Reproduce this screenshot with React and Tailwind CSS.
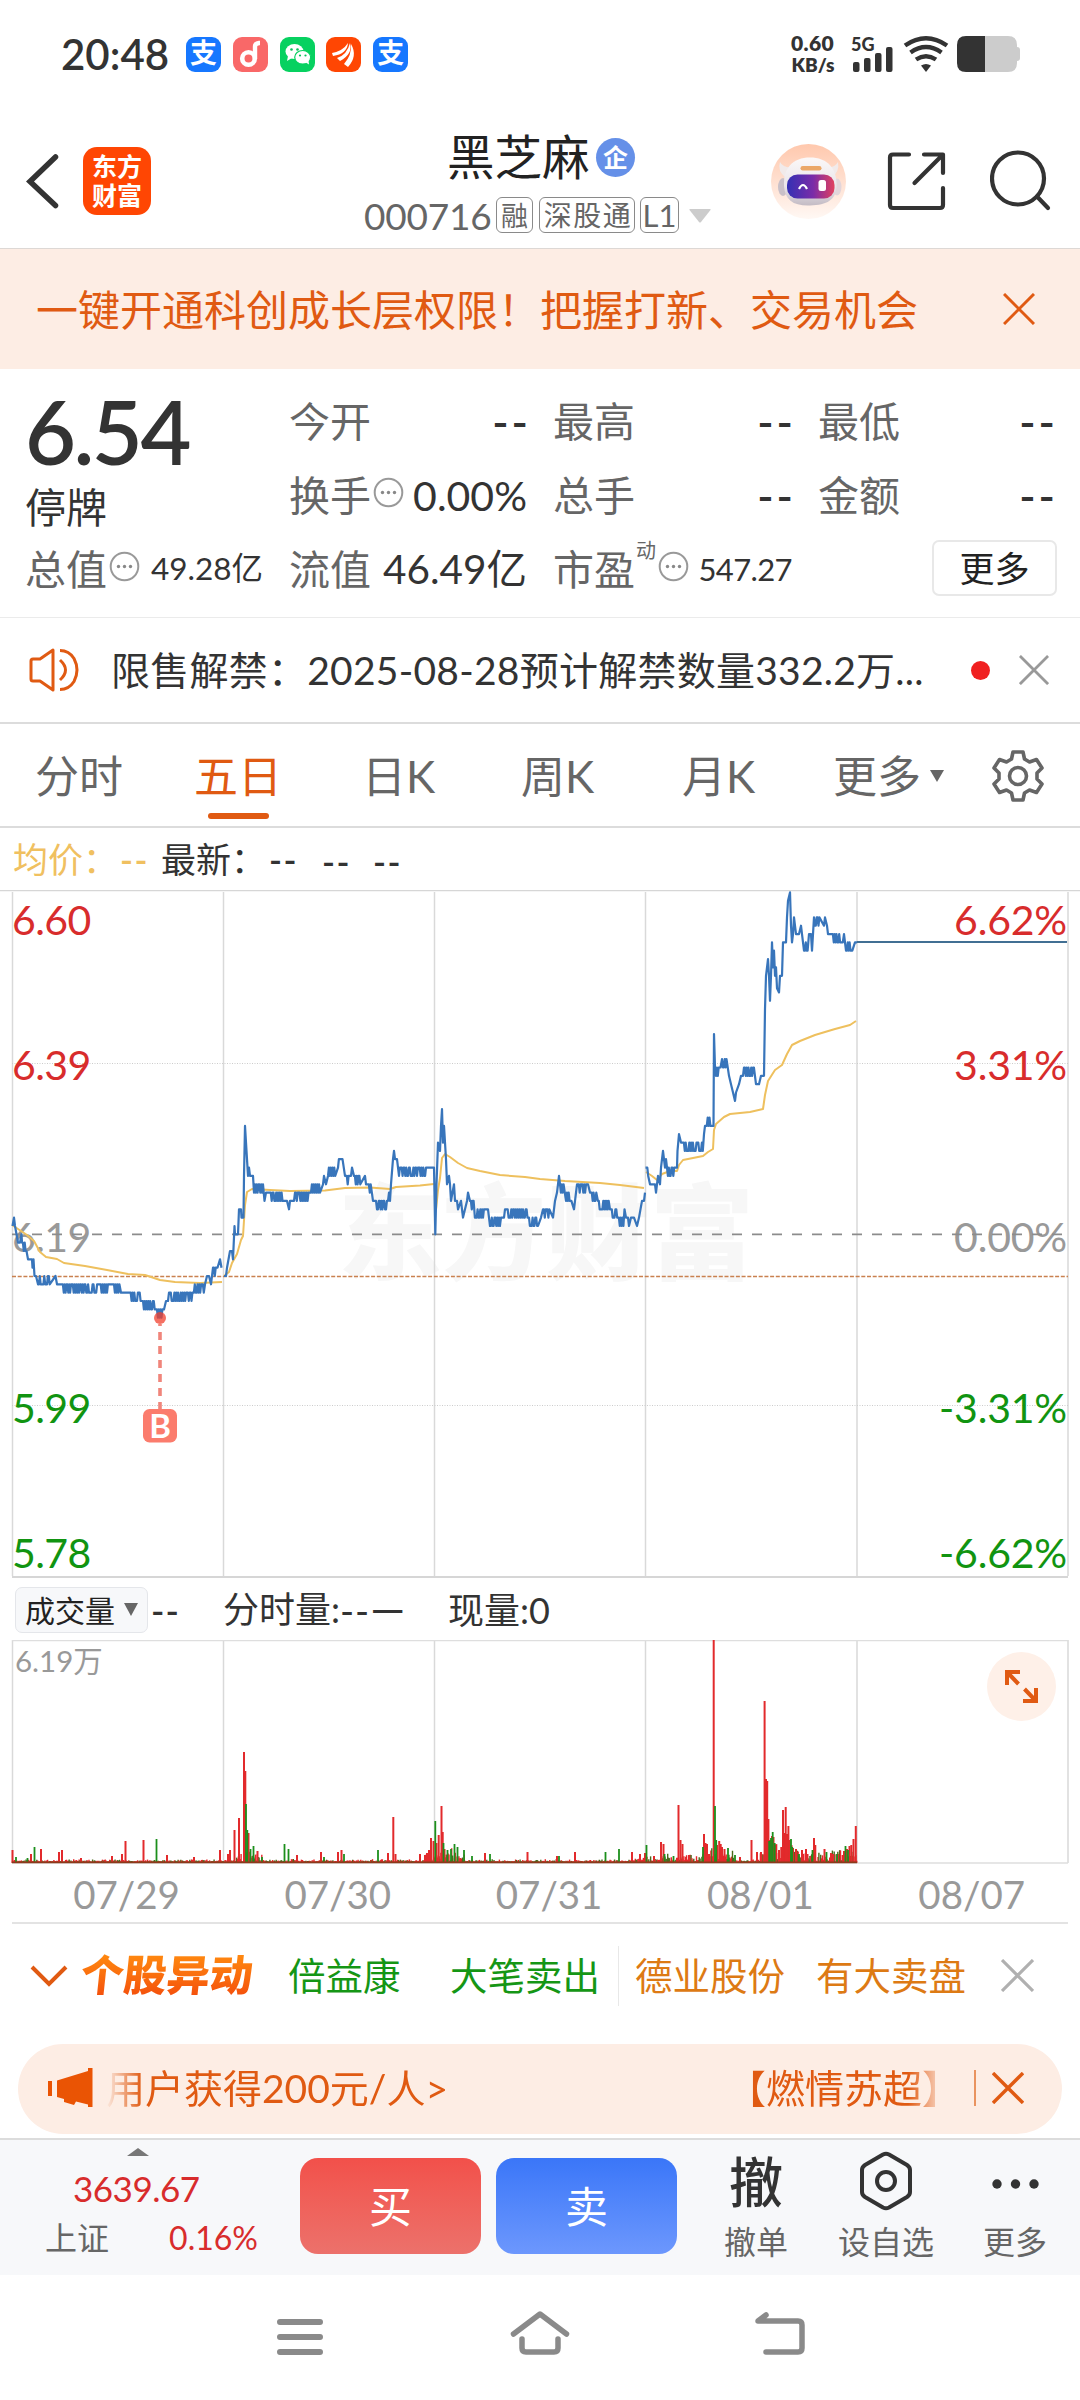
import { useId } from "react";

const DAYS = ["07/29", "07/30", "07/31", "08/01", "08/07"];
const GRID_X = [12.5, 223.5, 434.5, 645.5, 857, 1068];
const ZERO_Y = 1234.3;
const TICK = 8.34;

// [x, tick] is a plain point, [x, tick, 1] flickers between tick and tick + 1 up to x
const PRICE = [
  [
    [12.5, 1], [14, 2], [15, 1], [16.5, 0], [18, -1], [20, -1], [21.5, 0], [22, -1], [27, -2, 1], [28, -3], [32, -3],
    [32.5, -4], [33.5, -3], [34.5, -5], [36, -5], [38, -6], [50, -6, 1], [55.5, -5], [57, -6], [62, -6], [108, -7, 1],
    [114, -6], [120, -7, 1], [121, -7], [128, -7], [141, -8, 1], [143, -8], [156, -9, 1], [157, -9], [163, -10, 1],
    [164, -9], [166, -8], [168, -8], [169, -7], [193, -8, 1], [204, -7, 1], [205, -6], [207, -5], [209, -5], [211, -6],
    [213, -4], [218, -5, 1], [220, -3], [221.5, -4]
  ],
  [
    [224, -5], [226, -5], [227, -4], [230, -2], [232, -2], [233, -3], [234.5, 1], [235, 0], [238, 0], [239, 3], [241, 3],
    [241.5, 2], [243.5, 2], [244, 7], [245, 13], [246, 11], [248, 7], [249, 8], [250, 7], [253, 7], [254, 5],
    [263, 5, 1], [264.5, 4], [266, 5], [269, 5], [285, 4, 1], [287, 4], [289, 3], [290, 4], [294, 4], [295, 5],
    [309, 4, 1], [311, 5], [320, 5, 1], [323, 6], [324, 7], [326, 6], [328, 7], [336, 7, 1], [338, 8], [343, 8, 1],
    [345, 7], [349, 6, 1], [351, 7], [352, 8], [354, 7], [361, 6, 1], [365, 7], [366, 6], [368, 6], [371, 5, 1],
    [373, 4], [376, 4], [377, 3], [387, 3, 1], [388, 4], [389, 5], [390, 4], [391, 6], [393, 9], [394, 10], [395, 9],
    [397, 9], [399, 7], [427, 7, 1], [434, 8], [435.3, 0], [436.5, 6], [438, 11], [440, 10], [441, 13], [442, 15],
    [443, 11], [444, 13], [446, 9], [447, 6], [449, 7], [450, 6], [451, 4], [454, 6], [455, 4], [457, 4], [458, 3],
    [461, 4], [463, 2], [465, 3], [467, 4], [468, 5], [470, 4], [474, 3, 1], [485, 2, 1], [488, 3], [490, 1],
    [500, 1, 1], [501, 2], [504, 2], [505, 3], [528, 2, 1], [529, 2], [538, 1, 1], [541, 2], [543, 3], [550, 2, 1],
    [553, 2], [555, 4], [557, 5], [559, 7], [560, 6], [564, 5, 1], [566, 4], [572, 4, 1], [574, 3], [576, 5], [577, 6],
    [587, 5, 1], [588, 6], [590, 5], [597, 4, 1], [609, 3, 1], [610, 3], [618, 2, 1], [624, 1, 1], [624.5, 3], [626, 2],
    [628, 2], [629, 1], [631, 2], [634, 2], [637, 1], [639, 2], [642, 4], [644, 4], [645, 5]
  ],
  [
    [645.5, 8], [649, 7, 1], [650, 6], [655, 6], [656, 5], [658, 7], [660, 6], [661, 8], [663, 10], [665, 8], [666, 9],
    [667, 8], [675, 7, 1], [677, 8], [677.5, 10], [679, 12], [681, 11], [683, 11], [703, 10, 1], [704, 12], [705, 13],
    [713, 13, 1], [713.5, 13], [714, 24], [715, 20], [716, 19], [721, 19, 1], [722, 21], [727, 20, 1], [729, 19],
    [731, 18], [733, 17], [735, 16], [736, 17], [739, 18], [741, 19], [743, 19], [744, 20], [754, 19, 1], [756, 18],
    [759, 18], [761, 19], [764, 19], [765, 27], [766, 31], [768, 33], [769, 31], [770, 28], [771, 31], [772, 35],
    [773, 32], [774, 34], [775, 31], [776, 32], [777, 29.5], [779, 29], [780, 31], [782, 31], [783, 35], [786, 35],
    [787, 38], [788, 40], [790, 41], [791, 37], [792, 35], [793, 36], [794, 38], [796, 36], [799, 36], [801, 37],
    [802, 36], [803, 35], [804, 34], [808, 34, 1], [809, 36], [811, 36], [812, 34], [814, 38], [820, 37, 1], [824, 37],
    [825, 38], [827, 37], [828, 36], [832, 36], [843, 35, 1], [844, 36], [846, 34], [853, 34, 1], [855, 35], [857, 35]
  ]
];

const AVERAGE = [
  "12,1225 18,1229 27,1235 34,1241 40,1252 46,1257 57,1259 64,1263 85,1266 107,1270 128,1274 145,1275 160,1280 175,1282 200,1283 222,1282",
  "224,1276 229,1272 232,1263 237,1254 241,1240 243,1236 245,1205 247,1192 252,1189 270,1190 290,1191 325,1190.5 345,1188 370,1187.5 390,1189 396,1187 420,1185.5 434,1184",
  "436,1210 438,1190 440,1178 442,1158 445,1154 450,1157 458,1163 467,1168 480,1171 500,1175 525,1177 540,1179 565,1181 600,1183 620,1185 644,1188",
  "646,1172 652,1176 657,1180 662,1174 670,1171 677,1171 679,1165 683,1160 703,1156 708,1152 713,1149 714,1130 716,1124 724,1117 730,1114 750,1112 763,1109 765,1095 768,1081 775,1070 782,1065 787,1054 792,1045 800,1041 815,1035 835,1029 850,1025 856,1021"
];

// volume spikes, x and height in px
const VOL_UP = [
  [12.5, 13], [31, 9], [41, 14], [59, 11], [62, 13], [81, 5], [112, 7], [122, 9], [125.5, 22], [143.5, 23], [167, 8],
  [194, 6], [220, 13], [228, 9], [230, 13], [234.5, 33], [239, 45], [244, 111], [245.3, 92], [248.5, 30], [257.5, 12],
  [297, 8], [321, 11], [338, 11], [341.5, 13], [388, 10], [393.3, 46], [395.5, 9], [420, 9], [425, 8], [427, 10],
  [429, 13], [431, 25], [433.5, 22], [436.5, 20], [438.7, 28], [441.5, 57], [442.700, 31], [444.5, 14], [485, 10],
  [527.5, 11], [557, 7], [575, 11], [632, 11], [640, 9], [645, 10], [654, 7], [661, 21], [663.5, 19], [678.5, 58],
  [680.5, 23], [682.5, 19], [689, 8], [704, 29], [705.5, 20], [707, 19], [709, 9], [713.7, 223], [717, 18], [719.2, 22],
  [720.700, 19], [722, 16], [724.5, 14], [740, 6], [751.5, 23], [757, 11], [761, 11], [764.6, 162], [766, 84], [767.2, 82],
  [768.4, 44], [770, 23], [772, 27], [773.500, 26], [779, 13], [781.3, 16], [783, 53], [784.3, 30], [785.7, 56],
  [787, 29], [788.4, 37], [789.6, 23], [793, 15], [796, 14], [802, 13], [806, 14], [807.5, 9], [814, 25], [815.300, 18],
  [824.5, 14], [831, 10], [833, 9], [838, 9], [844, 12], [847, 14], [849.500, 17], [851.300, 18], [853.5, 24], [855.8, 37]
];
const VOL_DOWN = [
  [16, 6], [34.5, 16], [27.5, 5], [156.5, 24], [246, 59], [247.3, 33], [250.5, 14], [253.5, 17], [262, 6], [284.5, 19],
  [288.5, 14], [378, 13], [324, 6], [344, 9], [435.3, 42], [443.500, 20], [447.5, 13], [451, 14], [454.5, 19], [457.5, 16],
  [464, 13], [472, 7], [490, 9], [559, 7], [605.5, 11], [619, 14], [646.5, 18], [664.500, 9], [673.5, 7], [703, 16],
  [715, 57], [716.2, 23], [728, 15], [735, 8], [769.2, 22], [771, 25], [772.700, 31], [774.700, 20], [791, 24],
  [792.2, 16], [799, 9], [812.5, 13], [826.5, 11], [837, 9], [845.5, 17], [848, 13]
];

const rand = (n) => {
  const v = Math.sin(n * 127.1 + 11.7) * 43758.5453;
  return v - Math.floor(v);
};

function pricePath(points) {
  const out = [];
  let prevX = points[0][0];
  points.forEach(([x, tick, flicker]) => {
    if (flicker) {
      let up = false;
      for (let px = prevX + 0.9; px < x; px += 0.9) {
        if (rand(px) > 0.3) up = !up;
        out.push(`${px.toFixed(1)},${(ZERO_Y - (tick + (up ? 1 : 0)) * TICK).toFixed(1)}`);
      }
    } else {
      out.push(`${x},${(ZERO_Y - tick * TICK).toFixed(1)}`);
    }
    prevX = x;
  });
  return out.join(" ");
}

// background trading noise, heavier around the busy stretches
function noiseHeight(x) {
  let base = 2.5;
  if (x > 235 && x < 262) base = 12;
  else if (x > 425 && x < 465) base = 14;
  else if (x > 635 && x < 700) base = 8;
  else if (x > 700 && x < 735) base = 15;
  else if (x > 760 && x < 800) base = 24;
  else if (x >= 800) base = 15;
  return 1.5 + (0.25 + 0.75 * rand(x)) * rand(x + 3) * base;
}

const NOISE = Array.from({ length: 939 }, (_, i) => {
  const x = 12.5 + i * 0.9;
  return { x, h: noiseHeight(x), up: rand(x * 3) > 0.4 };
});

function Cross({ className, width = 3 }) {
  return (
    <svg className={className} viewBox="0 0 32 32" fill="none" stroke="currentColor" strokeWidth={width}>
      <path d="M1 1 31 31M31 1 1 31" />
    </svg>
  );
}

function Hint({ className }) {
  return (
    <svg className={className} viewBox="0 0 31 31">
      <circle cx="15.5" cy="15.5" r="13.8" fill="none" stroke="#999" strokeWidth="2" />
      <circle cx="9.5" cy="15.5" r="1.7" fill="#888" />
      <circle cx="15.5" cy="15.5" r="1.7" fill="#888" />
      <circle cx="21.5" cy="15.5" r="1.7" fill="#888" />
    </svg>
  );
}

function PayIcon() {
  return (
    <div className="flex size-[35px] items-center justify-center rounded-[9px] bg-[#1677ff] text-[27px] leading-none font-bold text-white">
      <span className="-mt-[3px]">支</span>
    </div>
  );
}

function StatusBar() {
  return (
    <div className="flex h-[108px] shrink-0 items-center pl-[61px] text-[#333]">
      <div className="w-[125px] text-[42px] leading-none font-semibold">20:48</div>
      <div className="flex w-[604px] gap-[11.8px]">
        <PayIcon />
        <svg className="size-[35px]" viewBox="0 0 35 35">
          <rect width="35" height="35" rx="9" fill="#f96868" />
          <circle cx="15.5" cy="21.5" r="6.3" fill="none" stroke="#fff" strokeWidth="4.6" />
          <path d="M22 22V9.5q0-3 4-3.5h1" fill="none" stroke="#fff" strokeWidth="4.4" />
        </svg>
        <svg className="size-[35px]" viewBox="0 0 35 35">
          <rect width="35" height="35" rx="9" fill="#07d160" />
          <ellipse cx="14.5" cy="14.5" rx="9" ry="7.5" fill="#fff" />
          <path d="M8 19l-1 5 5-3z" fill="#fff" />
          <ellipse cx="22.7" cy="20.3" rx="8" ry="6.8" fill="#fff" stroke="#07d160" strokeWidth="1.2" />
          <path d="M25 25l4 2.6-.5-4z" fill="#fff" />
          <circle cx="11.5" cy="12.5" r="1.3" fill="#07c05a" />
          <circle cx="17.5" cy="12.5" r="1.3" fill="#07c05a" />
          <circle cx="20" cy="18.5" r="1.1" fill="#07c05a" />
          <circle cx="25.5" cy="18.5" r="1.1" fill="#07c05a" />
        </svg>
        <svg className="size-[35px]" viewBox="0 0 35 35">
          <rect width="35" height="35" rx="9" fill="#ff4603" />
          <path d="M6 16Q17 14 22 6q-1 11-15 13z" fill="#fff" />
          <path d="M11 21Q21 18 24 6q3 11-10 18z" fill="#fff" />
          <path d="M18 27Q26 18 25 7q7 12-3 23z" fill="#fff" />
        </svg>
        <PayIcon />
      </div>
      <div className="w-[60px] text-center text-[21px] leading-[22px] font-extrabold">
        <div className="-ml-[15px] tracking-[0.4px]">0.60</div>
        <div className="-ml-[14px] text-[19px]">KB/s</div>
      </div>
      <svg className="h-[48px] w-[172px] shrink-0" viewBox="850 30 172 48" fill="#333">
        <text x="851" y="50.5" fontSize="18" fontWeight="900">5G</text>
        <rect x="853" y="62" width="6.5" height="10" rx="2" />
        <rect x="864" y="58" width="6.5" height="14" rx="2" />
        <rect x="875" y="53" width="6.5" height="19" rx="2" />
        <rect x="886" y="47" width="6.5" height="25" rx="2" />
        <g fill="none" stroke="#333" strokeWidth="4.4">
          <path d="M905 45.5Q926 31 947 45.5" />
          <path d="M910.5 52.5Q926 41.5 941.5 52.5" />
          <path d="M916 59.5Q926 53 936 59.5" />
        </g>
        <path d="M921 65.5q5-3 10 0L926 72z" />
        <path d="M965 36h43q9 0 9 9v2q3 0 3 3v8q0 3-3 3v2q0 9-9 9h-23V36z" fill="#ccc" />
        <path d="M985 36h-19q-9 0-9 9v18q0 9 9 9h19z" />
      </svg>
    </div>
  );
}

function Robot() {
  const id = useId();
  return (
    <svg className="ml-[59px] size-[75px] shrink-0" viewBox="0 0 75 75">
      <defs>
        <linearGradient id={`${id}bg`} x2="0" y2="1">
          <stop stopColor="#ffc8ad" />
          <stop offset="1" stopColor="#fff8f4" />
        </linearGradient>
        <linearGradient id={`${id}visor`}>
          <stop stopColor="#3430b4" />
          <stop offset=".55" stopColor="#7a2ca8" />
          <stop offset="1" stopColor="#e2405e" />
        </linearGradient>
        <linearGradient id={`${id}head`} x2="0" y2="1">
          <stop stopColor="#fbf8f8" />
          <stop offset=".6" stopColor="#eae5ea" />
          <stop offset="1" stopColor="#c3bbc4" />
        </linearGradient>
      </defs>
      <circle cx="37.5" cy="37.5" r="37.5" fill={`url(#${id}bg)`} />
      <path d="M15 34Q6 27 9 18q4 7 14 5zM60 34q9-6 7-16-4 7-13 5z" fill="#f1eaea" />
      <ellipse cx="12" cy="43" rx="5" ry="9" fill="#c9c0c8" />
      <ellipse cx="66" cy="43" rx="4.500" ry="8.500" fill="#e2d5da" />
      <path d="M13 42C12 24 22 13.500 39 13.500S66 24 65.500 42C65 56 56 61 39 61.500S14 56 13 42z" fill={`url(#${id}head)`} />
      <rect x="29.5" y="22" width="21" height="4.500" rx="2.200" fill="#eba768" />
      <rect x="16" y="30.500" width="47.500" height="24" rx="10.500" fill={`url(#${id}visor)`} />
      <path d="M28 45q4-8 8 0" fill="none" stroke="#fff" strokeWidth="2.200" />
      <rect x="47.5" y="36" width="7.500" height="11" rx="2.500" fill="#fff" />
    </svg>
  );
}

function Header() {
  return (
    <header className="flex h-[141px] shrink-0 items-center border-b border-[#ddd8d5] pt-[6px] text-[#333]">
      <svg className="ml-[26px] h-[56px] w-[34px]" viewBox="0 0 34 56" fill="none" stroke="currentColor" strokeWidth="5.5" strokeLinecap="round">
        <path d="M29.5 4 4 28.5 29.5 52.5" />
      </svg>
      <div className="ml-[23px] flex size-[68px] flex-col items-center justify-center rounded-[14px] bg-[#ff4603] text-[25px] leading-[29px] font-bold text-white">
        <span>东方</span>
        <span>财富</span>
      </div>
      <div className="ml-[213px] w-[348px] self-start">
        <div className="flex h-[83px] items-center pl-[83px] text-[#222]">
          <h1 className="mt-[2px] w-[149px] text-[47.5px] leading-none">黑芝麻</h1>
          <span className="mt-[4px] flex size-[39px] items-center justify-center rounded-full bg-[#6590e8] text-[25px] leading-none font-bold text-white">
            企
          </span>
        </div>
        <div className="flex h-[36px] items-center text-[28px] leading-none text-[#666]">
          <span className="w-[132px] text-[37px] tracking-[-0.2px]">000716</span>
          <span className="mr-[6px] flex h-[36px] w-[37px] items-center justify-center rounded-[6px] border-[1.5px] border-[#8a8a8a] text-[27px]">融</span>
          <span className="mr-[5px] flex h-[36px] w-[96px] items-center justify-center rounded-[6px] border-[1.5px] border-[#8a8a8a] pl-[2px] tracking-[1.5px]">
            深股通
          </span>
          <span className="flex h-[36px] w-[39px] items-center justify-center rounded-[6px] border-[1.5px] border-[#8a8a8a] text-[31px]">L1</span>
          <svg className="mt-[1px] ml-[10px] h-[14px] w-[22px]" viewBox="0 0 22 14" fill="#ccc">
            <path d="M1 0H21Q22 0 21.5 1L12 13q-1 1-2 0L.5 1Q0 0 1 0z" />
          </svg>
        </div>
      </div>
      <Robot />
      <svg className="ml-[41px] size-[60px] shrink-0" viewBox="0 0 60 60" fill="none" stroke="currentColor" strokeWidth="4.2" strokeLinecap="round" strokeLinejoin="round">
        <path d="M22 3.5H6q-3 0-3 3V54q0 3 3 3H53q3 0 3-3V37" />
        <path d="M37 3.5H56V22M54 5.5 27.5 32" />
      </svg>
      <svg className="ml-[43px] size-[62px] shrink-0" viewBox="0 0 62 62" fill="none" stroke="currentColor" strokeWidth="4.2" strokeLinecap="round">
        <circle cx="28" cy="28.5" r="26" />
        <path d="M47 46.5 58 58" />
      </svg>
    </header>
  );
}

function Stat({ label, children }) {
  return (
    <div className="flex items-center pr-[26px] whitespace-nowrap">
      <span className="mr-auto text-[41px] text-[#666]">{label}</span>
      {children}
    </div>
  );
}

function Dashes() {
  return <span className="mr-[-4px] text-[44px] font-semibold tracking-[3px]">--</span>;
}

function Quote() {
  return (
    <section className="grid h-[249px] shrink-0 grid-cols-[264px_264px_265px_262px] grid-rows-[74px_74px_74px] border-b border-[#ebebeb] pt-[15px] pl-[25px] leading-none text-[#333]">
      <div className="row-span-2">
        <div className="pt-[2px] text-[88px] leading-[90px] font-semibold tracking-[-2.5px]">6.54</div>
        <div className="pt-[11px] text-[41px]">停牌</div>
      </div>
      <Stat label="今开"><Dashes /></Stat>
      <Stat label="最高"><Dashes /></Stat>
      <Stat label="最低"><Dashes /></Stat>
      <Stat label={<span className="flex">换手<Hint className="mt-[2px] ml-[2px] size-[31px]" /></span>}>
        <span className="text-[41px]">0.00%</span>
      </Stat>
      <Stat label="总手"><Dashes /></Stat>
      <Stat label="金额"><Dashes /></Stat>
      <Stat label={<span className="flex">总值<Hint className="mt-[2px] ml-[2px] size-[31px]" /></span>}>
        <span className="text-[31.5px]">49.28亿</span>
      </Stat>
      <Stat label="流值">
        <span className="text-[40.5px]">46.49亿</span>
      </Stat>
      <Stat
        label={
          <span className="flex">
            市盈<small className="-mt-[9px] ml-[1px] text-[20px]">动</small>
            <Hint className="mt-[2px] ml-[2px] size-[31px]" />
          </span>
        }
      >
        <span className="text-[31px] tracking-[-0.6px]">547.27</span>
      </Stat>
      <button className="mt-[8px] ml-[114px] h-[56px] w-[125px] rounded-[7px] border-2 border-[#e8e8e8] text-[35px] leading-none text-[#222]">
        更多
      </button>
    </section>
  );
}

function Notice() {
  return (
    <div className="flex h-[106px] shrink-0 items-center border-b-2 border-[#dcdcdc] text-[#333]">
      <svg className="ml-[28px] h-[46px] w-[54px]" viewBox="0 0 54 46" fill="none" stroke="#e05a12" strokeWidth="3" strokeLinejoin="round">
        <path d="M25 3V43L12 34H5q-2 0-2-2V14q0-2 2-2h7z" />
        <path d="M32 13q11 10 0 20M32 3.5q9 0 14 8 6 11.5 0 23-5 8-14 8" />
      </svg>
      <p className="ml-[29px] w-[860px] text-[39px] leading-none tracking-[0.25px] whitespace-nowrap">限售解禁：2025-08-28预计解禁数量332.2万...</p>
      <span className="size-[19px] rounded-full bg-[#f02020]" />
      <Cross className="ml-[29px] size-[30px] text-[#999]" />
    </div>
  );
}

function Tabs() {
  return (
    <nav className="flex h-[104px] shrink-0 items-center border-b-2 border-[#dcdcdc] pt-[2px] text-[44px] leading-none text-[#666]">
      <span className="ml-[35px] w-[159px]">分时</span>
      <span className="relative w-[168px] text-[#e05a12]">
        五日
        <i className="absolute top-[59px] left-[14px] h-[6px] w-[61px] rounded-full bg-[#e05a12]" />
      </span>
      <span className="w-[159px]">日K</span>
      <span className="w-[161px]">周K</span>
      <span className="w-[151px]">月K</span>
      <span className="w-[97px]">更多</span>
      <svg className="h-[12px] w-[14px]" viewBox="0 0 14 12" fill="#666">
        <path d="M0 0H14L7 12z" />
      </svg>
      <svg className="ml-[47px] size-[54px]" viewBox="0 0 54 54" fill="none" stroke="#666" strokeWidth="3.6" strokeLinejoin="round">
        <path d="M22 3h10l1.5 7 5 3 7-2.5 5.5 8.5-5 5v6l5 5-5.5 8.5-7-2.5-5 3L32 51H22l-1.5-7-5-3-7 2.5L3 35l5-5v-6l-5-5 5.5-8.5 7 2.5 5-3z" />
        <circle cx="27" cy="27" r="8.5" />
      </svg>
    </nav>
  );
}

function PriceChart() {
  const labels = [
    [934.5, "6.60", "6.62%", "#d82c2c"],
    [1080, "6.39", "3.31%", "#d82c2c"],
    [1252, "6.19", "0.00%", "#999"],
    [1423, "5.99", "-3.31%", "#119411"],
    [1568, "5.78", "-6.62%", "#119411"]
  ];
  return (
    <svg className="h-[689px] w-[1080px] shrink-0" viewBox="0 890 1080 689">
      <g fontSize="104" fontWeight="900" fill="#f7f7f7">
        <text x="338" y="1272" textLength="416">东方财富</text>
      </g>
      {GRID_X.map((x) => (
        <path key={x} d={`M${x} 892V1576`} stroke="#d9d9d9" strokeWidth="1.5" />
      ))}
      <path d="M0 890.5H1080" stroke="#d6d6d6" strokeWidth="1.5" />
      <path d="M12 1577H1068" stroke="#d6d6d6" strokeWidth="2" />
      <path d="M12 1063.5H1068M12 1405.5H1068" stroke="#ccc" strokeDasharray="1 1.5" />
      {labels.map(([y, price, pct, color]) => (
        <g key={y} fontSize="41" fill={color}>
          <text x="12" y={y} letterSpacing="-0.6">{price}</text>
          <text x="1067" y={y} textAnchor="end" letterSpacing="-0.2">{pct}</text>
        </g>
      ))}
      <path d={`M12 ${ZERO_Y}H1068`} stroke="#8c8c8c" strokeWidth="1.8" strokeDasharray="10 10" />
      <path d="M12 1276.5H1068" stroke="#c9814f" strokeWidth="1.4" strokeDasharray="4 1.7" />
      <g fill="none" stroke="#eec05e" strokeWidth="2" strokeLinejoin="round">
        {AVERAGE.map((points) => (
          <polyline key={points} points={points} />
        ))}
      </g>
      <g fill="none" stroke="#3875bb" strokeWidth="2.2" strokeLinejoin="round">
        {PRICE.map((points) => (
          <polyline key={points[0][0]} points={pricePath(points)} />
        ))}
      </g>
      <path d="M857 942H1067" stroke="#416f93" strokeWidth="1.8" />
      <circle cx="160" cy="1318" r="6" fill="#f2402e" fillOpacity=".75" />
      <path d="M160 1324V1409" stroke="#f0857b" strokeWidth="3.6" strokeDasharray="8 6" strokeDashoffset="6" />
      <rect x="143" y="1409" width="34" height="33.5" rx="6.5" fill="#fb7c6d" />
      <text x="160" y="1437.5" fontSize="33" fontWeight="700" fill="#fff" textAnchor="middle">B</text>
    </svg>
  );
}

function VolumeHeader() {
  return (
    <div className="flex h-[61px] shrink-0 items-center pl-[15px] text-[36px] leading-none whitespace-nowrap text-[#333]">
      <div className="flex h-[46px] w-[133px] items-center rounded-[7px] border border-[#e4e6ea] bg-[#f7f8fa] pl-[9px] text-[30px] text-[#222]">
        成交量
        <svg className="ml-[9px] h-[13px] w-[14px]" viewBox="0 0 14 13" fill="#666">
          <path d="M0 0H14L7 13z" />
        </svg>
      </div>
      <span className="ml-[3px] w-[72px] font-semibold tracking-[1px]">--</span>
      <span className="flex w-[225px]">
        分时量:<span className="text-[38px] tracking-[1px]">--</span>
        <span className="text-[44px] leading-[34px]">—</span>
      </span>
      <span>现量:0</span>
    </div>
  );
}

function VolumeChart() {
  return (
    <svg className="h-[285px] w-[1080px] shrink-0" viewBox="0 1640 1080 285">
      {GRID_X.map((x) => (
        <path key={x} d={`M${x} 1640V1863`} stroke="#d9d9d9" strokeWidth="1.5" />
      ))}
      <path d="M12 1640.5H1068M12 1863H1068" stroke="#dedede" strokeWidth="1.5" />
      <text x="15" y="1672" fontSize="29.5" fill="#999">6.19万</text>
      <g strokeWidth="1.4">
        {NOISE.map(({ x, h, up }) => (
          <path key={x} d={`M${x} 1863v${-h}`} stroke={up ? "#e8262a" : "#4a6a1c"} />
        ))}
      </g>
      <g stroke="#e22a2c" strokeWidth="2">
        {VOL_UP.map(([x, h]) => (
          <path key={x} d={`M${x} 1863v${-h}`} />
        ))}
      </g>
      <g stroke="#1c8f1c" strokeWidth="1.8">
        {VOL_DOWN.map(([x, h]) => (
          <path key={x} d={`M${x} 1863v${-h}`} />
        ))}
      </g>
      <path d="M12 1862.3H857" stroke="#8c3a1c" strokeWidth="1.8" />
      <circle cx="1021.5" cy="1686.5" r="34.5" fill="#fef0e8" />
      <g fill="none" stroke="#e05a12" strokeWidth="4">
        <path d="M1020 1672H1007V1685M1007 1672 1018.5 1684" />
        <path d="M1023 1701H1036V1688M1036 1701 1024.5 1689" />
      </g>
      {DAYS.map((day, i) => (
        <text key={day} x={126.5 + i * 211.3} y="1909" fontSize="38.5" fill="#999" textAnchor="middle">{day}</text>
      ))}
      <path d="M12 1923H1068" stroke="#e3e3e3" strokeWidth="2" />
    </svg>
  );
}

function Movers() {
  return (
    <div className="flex h-[103px] shrink-0 items-center pb-[2px] text-[37.5px] leading-none whitespace-nowrap">
      <svg className="ml-[30px] h-[22px] w-[38px]" viewBox="0 0 38 22" fill="none" stroke="#e05a12" strokeWidth="4">
        <path d="M2 2 19 19 36 2" />
      </svg>
      <div className="ml-[13px] w-[207px]">
        <span className="-mt-[2px] inline-block -skew-x-6 bg-linear-to-b from-[#ff8a10] to-[#f4500c] bg-clip-text text-[43px] font-black text-transparent">
          个股异动
        </span>
      </div>
      <span className="w-[162px] text-[#159615]">倍益康</span>
      <span className="w-[168px] text-[#159615]">大笔卖出</span>
      <i className="h-[60px] w-px bg-[#e8e8e8]" />
      <span className="ml-[16px] w-[181px] text-[#dd7a14]">德业股份</span>
      <span className="w-[185px] text-[#dd7a14]">有大卖盘</span>
      <Cross className="size-[33px] text-[#b0b0b0]" />
    </div>
  );
}

function Promo() {
  return (
    <div className="mx-[18px] mt-[16px] mb-[4px] flex h-[90px] shrink-0 items-center rounded-full bg-[#fdede4] pb-[2px] text-[39px] leading-none whitespace-nowrap text-[#e05a12]">
      <svg className="ml-[29px] h-[40px] w-[47px]" viewBox="0 0 47 40" fill="#ea5404">
        <path d="M1 13h4v15H1zM10 12.5 41 3V0h4.5v39H41v-2.5l-12-3-2 3.5-10-3v-3l-7-2z" />
      </svg>
      <div className="ml-[12px] flex w-[832px] justify-between mask-[linear-gradient(to_right,transparent,black_36px,black_802px,transparent_840px)]">
        <span>用户获得200元/人&gt;</span>
        <span className="mr-[-23px]">【燃情苏超】</span>
      </div>
      <i className="ml-[36px] h-[36px] w-[2px] bg-[#e9935f]" />
      <Cross className="ml-[16px] size-[32px]" width={3.4} />
    </div>
  );
}

function TradeBar() {
  return (
    <footer className="flex h-[137px] shrink-0 border-t-2 border-[#dcdcdc] bg-[#f7f8fa] leading-none whitespace-nowrap text-[#666]">
      <div className="ml-[45px] w-[255px]">
        <svg className="mt-[8px] ml-[82px] h-[8px] w-[22px]" viewBox="0 0 22 8" fill="#777">
          <path d="M0 8 11 0 22 8z" />
        </svg>
        <div className="mt-[15px] ml-[28px] text-[35px] tracking-[-0.5px] text-[#d82c2c]">3639.67</div>
        <div className="mt-[16px] flex w-[213px] items-center justify-between text-[32px]">
          上证<span className="text-[#d82c2c]">0.16%</span>
        </div>
      </div>
      <button className="mt-[18px] h-[96px] w-[181px] rounded-[18px] bg-linear-to-b from-[#f2504a] to-[#ec716b] text-[43px] text-white">买</button>
      <button className="mt-[18px] ml-[15px] h-[96px] w-[181px] rounded-[18px] bg-linear-to-b from-[#3a76f8] to-[#6c97fd] text-[43px] text-white">卖</button>
      <div className="ml-[32px] flex w-[94px] flex-col items-center text-[32px]">
        <span className="mt-[16px] text-[54px] font-medium text-[#333]">撤</span>
        <span className="mt-[16px]">撤单</span>
      </div>
      <div className="ml-[32px] flex w-[102px] flex-col items-center text-[32px]">
        <svg className="mt-[11px] h-[60px] w-[54px]" viewBox="0 0 54 60" fill="none" stroke="#333" strokeWidth="4" strokeLinejoin="round">
          <path d="M24 3.5q3-1.5 6 0L48 14q3 2 3 5v22q0 3-3 5L30 56.500q-3 1.5-6 0L6 46q-3-2-3-5V19q0-3 3-5z" />
          <circle cx="27" cy="30" r="9" />
        </svg>
        <span className="mt-[15px]">设自选</span>
      </div>
      <div className="ml-[32px] flex w-[92px] flex-col items-center text-[32px]">
        <svg className="mt-[39px] h-[10px] w-[47px]" viewBox="0 0 47 10" fill="#333">
          <circle cx="5" cy="5" r="4.7" />
          <circle cx="23.5" cy="5" r="4.7" />
          <circle cx="42" cy="5" r="4.7" />
        </svg>
        <span className="mt-[37px]">更多</span>
      </div>
    </footer>
  );
}

function SystemNav() {
  return (
    <div className="flex h-[126px] shrink-0 items-start pt-[35px] text-[#8a8a8a]">
      <svg className="ml-[276px] h-[48px] w-[48px]" viewBox="0 0 48 48" fill="none" stroke="currentColor" strokeWidth="6" strokeLinecap="round">
        <path d="M4 12H44M4 27H44M4 42H44" />
      </svg>
      <svg className="ml-[185px] h-[48px] w-[62px]" viewBox="0 0 62 48" fill="none" stroke="currentColor" strokeWidth="5.5" strokeLinecap="round" strokeLinejoin="round">
        <path d="M4.5 24 31 4 57.5 24" />
        <path d="M13 29V38q0 4 4 4H45q4 0 4-4V29" />
      </svg>
      <svg className="ml-[183px] h-[48px] w-[52px]" viewBox="0 0 52 48" fill="none" stroke="currentColor" strokeWidth="5.5" strokeLinecap="round" strokeLinejoin="round">
        <path d="M12 42H44q4 0 4-4V15q0-4-4-4H4L12 5" />
      </svg>
    </div>
  );
}

export default function App() {
  return (
    <div className="flex h-[2400px] w-[1080px] flex-col overflow-hidden bg-white font-['Lato','Noto_Sans_CJK_SC',sans-serif]">
      <StatusBar />
      <Header />
      <div className="flex h-[120px] shrink-0 items-center bg-[#fdede4] pl-[36px] text-[42px] leading-none text-[#e05a12]">
        <p className="mt-[2px] w-[967px] whitespace-nowrap">一键开通科创成长层权限！把握打新、交易机会</p>
        <Cross className="size-[32px]" />
      </div>
      <Quote />
      <Notice />
      <Tabs />
      <div className="flex h-[62px] shrink-0 items-center pl-[13px] text-[35px] leading-none whitespace-nowrap text-[#333]">
        <span className="w-[107px] text-[#f0c060]">均价：</span>
        <span className="w-[41px] font-semibold tracking-[1.5px] text-[#f0c060]">--</span>
        <span className="w-[108px]">最新：</span>
        <span className="w-[53px] font-semibold tracking-[1.5px]">--</span>
        <span className="mt-[4px] w-[51px] font-semibold tracking-[1.5px]">--</span>
        <span className="mt-[4px] font-semibold tracking-[1.5px]">--</span>
      </div>
      <PriceChart />
      <VolumeHeader />
      <VolumeChart />
      <Movers />
      <Promo />
      <TradeBar />
      <SystemNav />
    </div>
  );
}
